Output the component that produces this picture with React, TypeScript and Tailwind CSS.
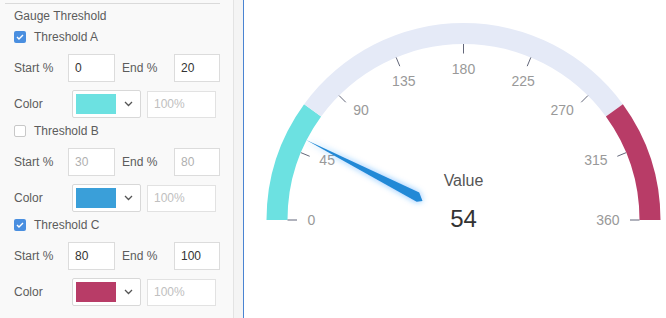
import React from 'react';

const font = { fontFamily: '"Liberation Sans", Arial, sans-serif' };

type Threshold = {
  name: string;
  on: boolean;
  start: string;
  end: string;
  color: string;
};

const THRESHOLDS: Threshold[] = [
  { name: 'Threshold A', on: true, start: '0', end: '20', color: '#6ce1e1' },
  { name: 'Threshold B', on: false, start: '30', end: '80', color: '#3a9fd9' },
  { name: 'Threshold C', on: true, start: '80', end: '100', color: '#b83c67' },
];

const CheckBox: React.FC<{ on: boolean }> = ({ on }) =>
  on ? (
    <span className="w-3 h-3 rounded-[2px] bg-[#4a8fe0] flex items-center justify-center">
      <svg width="8" height="6" viewBox="0 0 8 6">
        <polyline points="1,3 3,5 7,1" fill="none" stroke="#fff" strokeWidth="1.4" />
      </svg>
    </span>
  ) : (
    <span className="w-3 h-3 rounded-[2px] bg-white border border-[#c8c8c8]" />
  );

const ThresholdBlock: React.FC<{ t: Threshold }> = ({ t }) => (
  <div className="flex flex-col">
    <div className="h-[18px] flex items-center gap-2 pl-[14px]">
      <CheckBox on={t.on} />
      <span className="text-[12px] text-[#5c5c5c]">{t.name}</span>
    </div>
    <div className="mt-2 h-7 flex items-center text-[12px] text-[#5c5c5c]">
      <span className="pl-[14px] w-[68px]">Start %</span>
      <div className={`w-[47px] h-7 bg-white border border-[#dcdcdc] flex items-center pl-[6px] ${t.on ? 'text-[#333]' : 'text-[#b0b0b0]'}`}>
        {t.start}
      </div>
      <span className="pl-[7px] w-[59px]">End %</span>
      <div className={`w-[46px] h-7 bg-white border border-[#dcdcdc] flex items-center pl-[6px] ${t.on ? 'text-[#333]' : 'text-[#b0b0b0]'}`}>
        {t.end}
      </div>
    </div>
    <div className="mt-2 h-7 flex items-center text-[12px] text-[#5c5c5c]">
      <span className="pl-[14px] w-[72px]">Color</span>
      <div className="w-[69px] h-7 bg-white border border-[#d8d8d8] rounded-[2px] flex items-center pl-[3px]">
        <span className="w-10 h-5" style={{ background: t.color }} />
        <svg className="ml-[8px]" width="9" height="6" viewBox="0 0 9 6">
          <polyline points="1,1 4.5,4.5 8,1" fill="none" stroke="#555" strokeWidth="1.3" />
        </svg>
      </div>
      <div className="ml-[6px] w-[69px] h-[27px] bg-white border border-[#e2e2e2] flex items-center pl-[6px] text-[#c0c0c0]">
        100%
      </div>
    </div>
  </div>
);

const CX = 219.5;
const CY = 220;
const RO = 197;
const RI = 176;

const pt = (r: number, a: number) => {
  const rad = (a * Math.PI) / 180;
  return [CX + r * Math.cos(rad), CY - r * Math.sin(rad)];
};

const band = (a1: number, a2: number) => {
  const [x1, y1] = pt(RO, a1);
  const [x2, y2] = pt(RO, a2);
  const [x3, y3] = pt(RI, a2);
  const [x4, y4] = pt(RI, a1);
  return `M${x1},${y1} A${RO},${RO} 0 0 1 ${x2},${y2} L${x3},${y3} A${RI},${RI} 0 0 0 ${x4},${y4} Z`;
};

// label alignment as the chart lib does it: side anchors near the ends, hanging near the top
const LABELS = [0, 45, 90, 135, 180, 225, 270, 315, 360].map((v) => {
  const a = 180 - (v / 360) * 180;
  const ux = Math.cos((a * Math.PI) / 180);
  const uy = -Math.sin((a * Math.PI) / 180);
  const anchor = ux < -0.4 ? 'start' : ux > 0.4 ? 'end' : 'middle';
  const baseline = uy < -0.8 ? 'hanging' : 'central';
  return { v, a, anchor, baseline };
});

const Gauge: React.FC = () => {
  const value = 54;
  const a = 180 - (value / 360) * 180;
  const rad = (a * Math.PI) / 180;
  const ux = Math.cos(rad);
  const uy = -Math.sin(rad);
  const tip = [CX + 177 * ux, CY + 177 * uy];
  const needle = [
    tip,
    [CX + 52 * ux - 4.5 * uy, CY + 52 * uy + 4.5 * ux],
    [CX + 46 * ux, CY + 46 * uy + 2],
    [CX + 50 * ux + 5 * uy, CY + 50 * uy - 5 * ux],
  ]
    .map((p) => p.join(','))
    .join(' ');

  return (
    <svg width="422" height="318" viewBox="0 0 422 318" style={font}>
      <defs>
        <filter id="glow" x="-30%" y="-30%" width="160%" height="160%">
          <feGaussianBlur in="SourceAlpha" stdDeviation="4" />
          <feFlood floodColor="#1e8cff" floodOpacity="0.55" />
          <feComposite operator="in" in2="SourceAlpha" />
          <feGaussianBlur stdDeviation="3" />
          <feMerge>
            <feMergeNode />
            <feMergeNode in="SourceGraphic" />
          </feMerge>
        </filter>
      </defs>
      <path d={band(180, 144)} fill="#6ce1e1" />
      <path d={band(144, 36)} fill="#e5eaf7" />
      <path d={band(36, 0)} fill="#b83c67" />
      {LABELS.map((l) => {
        const [x1, y1] = pt(176, l.a);
        const [x2, y2] = pt(166.5, l.a);
        const [lx, ly] = pt(156, l.a);
        return (
          <g key={l.v}>
            <line x1={x1} y1={y1} x2={x2} y2={y2} stroke="#63677a" strokeWidth="1" />
            <text x={lx} y={ly} textAnchor={l.anchor} dominantBaseline={l.baseline} fontSize="14" fill="#999">
              {l.v}
            </text>
          </g>
        );
      })}
      <polygon points={needle} fill="#2189d6" filter="url(#glow)" />
      <text x={CX} y={186} textAnchor="middle" fontSize="16" fill="#555">
        Value
      </text>
      <text x={CX} y={227} textAnchor="middle" fontSize="24" fill="#333">
        {value}
      </text>
    </svg>
  );
};

export default function App() {
  return (
    <div className="w-[666px] h-[318px] flex bg-white overflow-hidden" style={font}>
      <div className="w-[234px] h-full bg-[#f9f9f9] border-r border-[#e3e3e3] flex flex-col">
        <div className="mt-[3px] ml-[5px] w-[215px] border-t border-[#dadada]" />
        <div className="h-[24px] flex items-center pl-[14px] text-[12px] text-[#5c5c5c]">Gauge Threshold</div>
        <div className="flex flex-col gap-1">
          {THRESHOLDS.map((t) => (
            <ThresholdBlock key={t.name} t={t} />
          ))}
        </div>
      </div>
      <div className="w-[9px] h-full bg-[#f4f4f4]" />
      <div className="w-px h-full bg-[#4a84d2]" />
      <div className="flex-1 h-full">
        <Gauge />
      </div>
    </div>
  );
}
